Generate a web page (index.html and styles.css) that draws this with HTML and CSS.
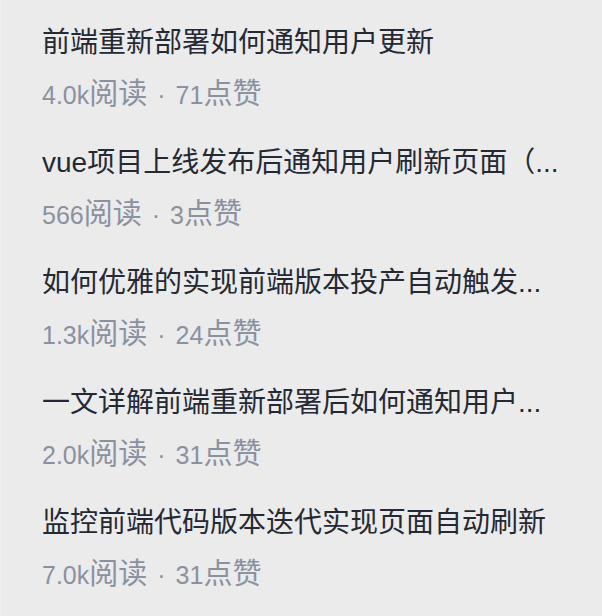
FILE: index.html
```
<!DOCTYPE html>
<html lang="zh-CN">
<head>
<meta charset="utf-8">
<title>相关文章</title>
<link rel="stylesheet" href="styles.css">
</head>
<body>
<div class="list">
  <div class="item">
    <div class="title">前端重新部署如何通知用户更新</div>
    <div class="meta">4.0k<span class="unit">阅读</span><span class="dot">·</span>71<span class="unit">点赞</span></div>
  </div>
  <div class="item">
    <div class="title">vue项目上线发布后通知用户刷新页面（...</div>
    <div class="meta">566<span class="unit">阅读</span><span class="dot">·</span>3<span class="unit">点赞</span></div>
  </div>
  <div class="item">
    <div class="title">如何优雅的实现前端版本投产自动触发...</div>
    <div class="meta">1.3k<span class="unit">阅读</span><span class="dot">·</span>24<span class="unit">点赞</span></div>
  </div>
  <div class="item">
    <div class="title">一文详解前端重新部署后如何通知用户...</div>
    <div class="meta">2.0k<span class="unit">阅读</span><span class="dot">·</span>31<span class="unit">点赞</span></div>
  </div>
  <div class="item">
    <div class="title">监控前端代码版本迭代实现页面自动刷新</div>
    <div class="meta">7.0k<span class="unit">阅读</span><span class="dot">·</span>31<span class="unit">点赞</span></div>
  </div>
</div>
</body>
</html>
```
FILE: styles.css
```
html, body {
  margin: 0;
  padding: 0;
  background: #ebebeb;
}
body {
  font-family: "Liberation Sans", "Noto Sans CJK SC", sans-serif;
  border-left: 1px solid #f0f0f0;
  min-height: 616px;
  box-sizing: border-box;
}
.list {
  padding: 8px 42px 0 41px;
}
.item {
  padding: 15px 0;
}
.title {
  font-size: 28px;
  line-height: 40px;
  color: #252933;
  white-space: nowrap;
  overflow: hidden;
  text-overflow: ellipsis;
}
.meta {
  margin-top: 14px;
  font-size: 25px;
  line-height: 36px;
  color: #8a919f;
  white-space: nowrap;
}
.unit {
  font-family: "Noto Sans CJK SC", sans-serif;
  font-size: 29px;
  line-height: 1;
}
.dot {
  display: inline-block;
  margin: 0 10px;
}
```
